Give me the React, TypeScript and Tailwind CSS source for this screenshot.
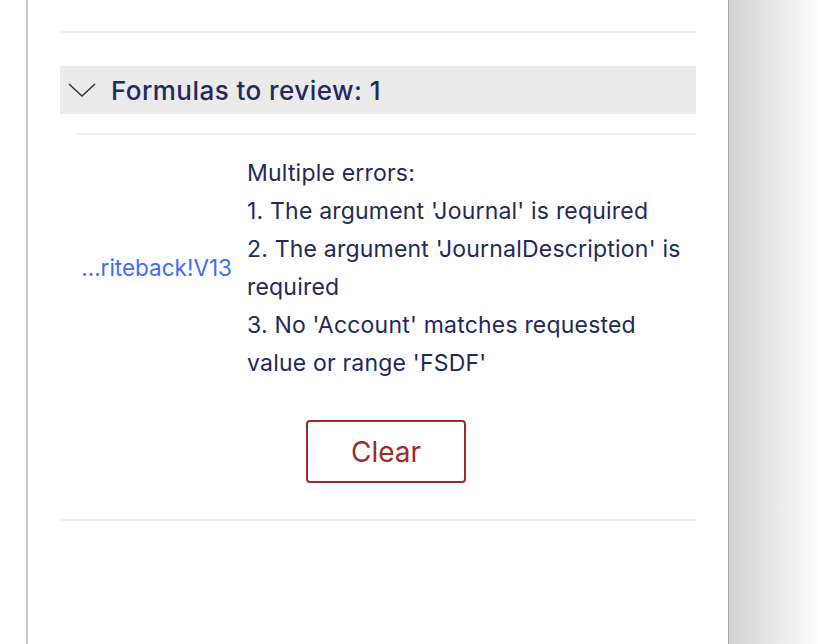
import React from "react";

function Chevron() {
  return (
    <svg width="30" height="18" viewBox="0 0 30 18" fill="none" className="shrink-0">
      <path d="M2 3 L15 15 L28 3" stroke="#333333" strokeWidth="1.6" />
    </svg>
  );
}

const errors = [
  "Multiple errors:",
  "1. The argument 'Journal' is required",
  "2. The argument 'JournalDescription' is",
  "required",
  "3. No 'Account' matches requested",
  "value or range 'FSDF'",
];

export default function App() {
  return (
    <div className="flex h-[644px] w-[818px] overflow-hidden bg-white" style={{ fontFamily: "Inter, 'Noto Sans', sans-serif" }}>
      <div className="w-[26px] shrink-0 bg-white" />
      <div className="w-[2px] shrink-0 bg-[#c6c6c6]" />
      <div className="flex w-[700px] shrink-0 flex-col px-8 pt-[31px]">
        <div className="h-[2px] bg-[#efefef]" />
        <div className="mt-[33px] flex h-[48px] items-center gap-[14px] bg-[#ebeaea] pl-[7px]">
          <Chevron />
          <span className="text-[26px] font-medium tracking-[0.45px] text-[#222a5c]">Formulas to review: 1</span>
        </div>
        <div className="ml-4 mt-[19px] h-[2px] bg-[#f1f1f1]" />
        <div className="ml-4 flex items-center pt-[19px]">
          <div className="flex w-[171px] shrink-0 justify-end pr-[15px]">
            <span className="text-[22.5px] text-[#3f6ef2]">…riteback!V13</span>
          </div>
          <div className="flex-1 text-[23px] leading-[38px] tracking-[0.2px] text-[#222a5c]">
            {errors.map((line) => (
              <div key={line} className="whitespace-nowrap">
                {line}
              </div>
            ))}
          </div>
        </div>
        <div className="ml-4 flex justify-center pt-[38px] pb-[36px]">
          <button
            type="button"
            className="h-[63px] w-[160px] rounded-[4px] border-2 border-[#9c2b2c] text-[28px] text-[#9c2b2c]"
          >
            Clear
          </button>
        </div>
        <div className="h-[2px] bg-[#efefef]" />
      </div>
      <div className="w-[1px] shrink-0 bg-[#a3a3a3]" />
      <div className="flex-1 bg-gradient-to-r from-[#d2d2d2] to-[#fdfdfd]" />
    </div>
  );
}
